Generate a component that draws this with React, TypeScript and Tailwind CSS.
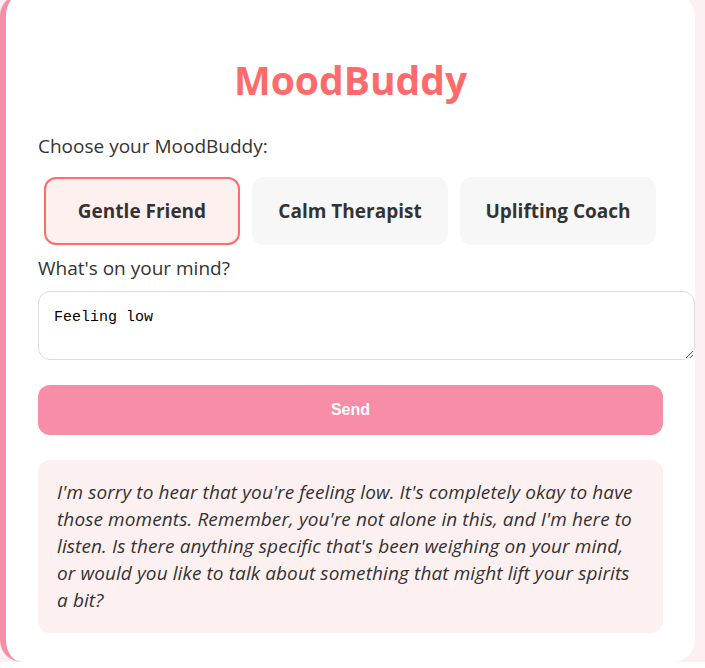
import { useState } from 'react'

const buddies = ['Gentle Friend', 'Calm Therapist', 'Uplifting Coach']

export default function App() {
  const [active, setActive] = useState('Gentle Friend')
  const [text, setText] = useState('Feeling low')

  return (
    <div className="min-h-screen bg-[#fcf0f3] pr-[10px] font-['Open_Sans',sans-serif] text-[#333]">
      <div className="-mt-[6px] rounded-[22px] border-l-[6px] border-[#f78da7] bg-white px-[32px] pt-[66px] pb-[29px]">
        <h1 className="text-center text-[39px] leading-[40px] font-bold text-[#ff6b6b]">MoodBuddy</h1>

        <p className="mt-[33px] text-[19px] leading-[26px]">Choose your MoodBuddy:</p>

        <div className="mt-[12px] flex">
          {buddies.map((b) => (
            <button
              key={b}
              onClick={() => setActive(b)}
              className={`m-[6px] h-[68px] w-[196px] rounded-[12px] border-2 text-[19px] font-bold text-[#333] ${
                active === b ? 'border-[#ff6b6b] bg-[#fff0f0]' : 'border-transparent bg-[#f7f7f7]'
              }`}
            >
              {b}
            </button>
          ))}
        </div>

        <p className="mt-[4px] text-[19px] leading-[26px]">What's on your mind?</p>

        <textarea
          value={text}
          onChange={(e) => setText(e.target.value)}
          className="mt-[10px] block h-[69px] w-[657px] rounded-[12px] border border-[#ddd] px-[15px] pt-[16px] font-['Liberation_Mono',monospace] text-[15px] leading-[20px] text-black outline-none"
        />

        <button className="mt-[25px] block h-[50px] w-full rounded-[12px] bg-[#f78da7] font-['Liberation_Sans',Arial,sans-serif] text-[16px] font-bold text-white">
          Send
        </button>

        <div className="mt-[25px] rounded-[12px] bg-[#fdf0f1] px-[19px] py-[19px] text-[19px] leading-[27px] tracking-[0.1px] italic">
          I'm sorry to hear that you're feeling low. It's completely okay to have those moments. Remember, you're
          not alone in this, and I'm here to listen. Is there anything specific that's been weighing on your mind, or
          would you like to talk about something that might lift your spirits a bit?
        </div>
      </div>
    </div>
  )
}
